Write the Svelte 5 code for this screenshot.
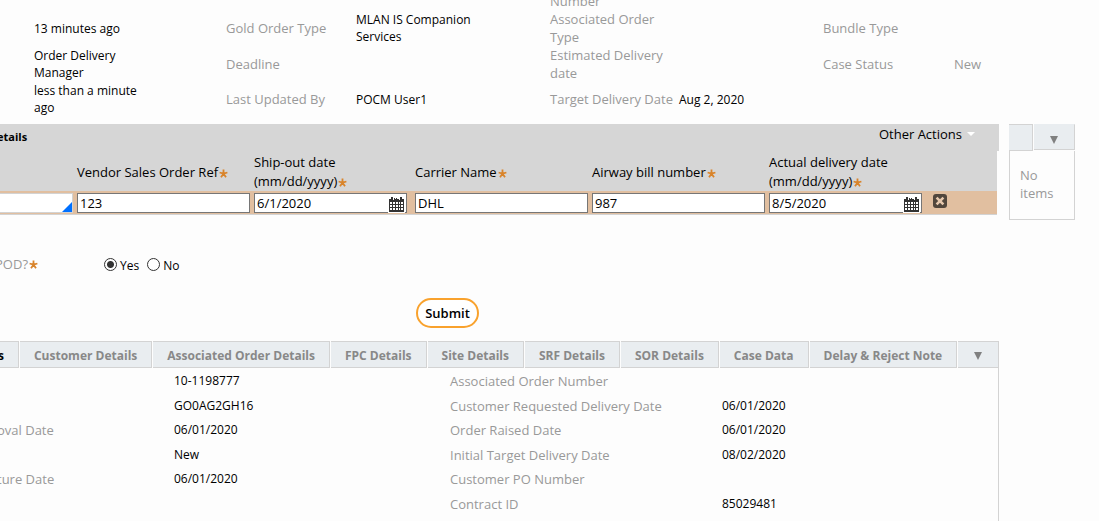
<script>
  const caseRows = [
    ['13 minutes ago', 'Gold Order Type', 'MLAN IS Companion Services', 'Associated Order Type', '', 'Bundle Type', ''],
    ['Order Delivery Manager', 'Deadline', '', 'Estimated Delivery date', '', 'Case Status', 'New'],
    ['less than a minute ago', 'Last Updated By', 'POCM User1', 'Target Delivery Date', 'Aug 2, 2020', '', '']
  ];

  let fields = $state([
    { id: 'vendor', label: ['Vendor Sales Order Ref'], value: '123', date: false },
    { id: 'shipout', label: ['Ship-out date', '(mm/dd/yyyy)'], value: '6/1/2020', date: true },
    { id: 'carrier', label: ['Carrier Name'], value: 'DHL', date: false },
    { id: 'airway', label: ['Airway bill number'], value: '987', date: false },
    { id: 'actual', label: ['Actual delivery date', '(mm/dd/yyyy)'], value: '8/5/2020', date: true }
  ]);
  let orderChoice = $state('');
  let pod = $state('yes');

  const tabs = [
    'Customer Details', 'Associated Order Details', 'FPC Details', 'Site Details',
    'SRF Details', 'SOR Details', 'Case Data', 'Delay & Reject Note'
  ];

  const details = [
    ['', '10-1198777', 'Associated Order Number', ''],
    ['', 'GO0AG2GH16', 'Customer Requested Delivery Date', '06/01/2020'],
    ['oval Date', '06/01/2020', 'Order Raised Date', '06/01/2020'],
    ['', 'New', 'Initial Target Delivery Date', '08/02/2020'],
    ['ture Date', '06/01/2020', 'Customer PO Number', ''],
    ['', '', 'Contract ID', '85029481']
  ];
</script>

{#snippet star()}
  <svg class="star" viewBox="0 0 9 9" aria-hidden="true">
    <path d="M4.5 0.4V4.7M4.5 4.7L0.6 3.5M4.5 4.7L8.4 3.5M4.5 4.7L2 8.3M4.5 4.7L7 8.3" />
  </svg>
{/snippet}

<div class="page">
  <header>
    <div class="row cut"><span class="label assoc">Number</span></div>
    {#each caseRows as row}
      <div class="row">
        {#each row as text, i}
          <span class={i % 2 || text === 'New' ? 'label' : 'value'}>{text}</span>
        {/each}
      </div>
    {/each}
  </header>

  <div class="columns">
    <main>
      <div class="band">
        <h2>etails</h2>
        <button class="actions" type="button">Other Actions <i></i></button>
      </div>
      <table>
        <colgroup>
          <col class="c-first" /><col class="c-text" /><col class="c-date" /><col class="c-text" />
          <col class="c-text" /><col class="c-date" /><col />
        </colgroup>
        <thead>
          <tr>
            <th></th>
            {#each fields as f}
              <th>
                <label for={f.id}>{f.label[0]}{#if f.label[1]}<br />{f.label[1]}{/if}{@render star()}</label>
              </th>
            {/each}
            <th></th>
          </tr>
        </thead>
        <tbody>
          <tr>
            <td>
              <div class="combo">
                <input type="text" aria-label="Order" bind:value={orderChoice} />
                <i></i>
              </div>
            </td>
            {#each fields as f}
              <td>
                <div class="field">
                  <input id={f.id} type="text" bind:value={f.value} />
                  {#if f.date}
                    <button type="button" aria-label="Calendar">
                      <svg viewBox="0 0 16 16" width="16" height="16">
                        <path fill="#333" d="M1 3h15v13H1z" />
                        <path fill="#fff" d="M3 1h3v3H3zM11 1h3v3h-3z" />
                        <path fill="#333" d="M3 1h2v4H3zM6 2h1v1H6zM8 2h1v1H8zM12 1h2v4h-2z" />
                        <path fill="#fff" d="M2 6h2v2H2zM5 6h2v2H5zM8 6h2v2H8zM11 6h1v2h-1zM13 6h2v2h-2zM2 9h2v2H2zM5 9h2v2H5zM8 9h2v2H8zM11 9h1v2h-1zM13 9h2v2h-2zM2 12h2v2H2zM5 12h2v2H5zM8 12h2v2H8zM11 12h1v2h-1zM13 12h2v2h-2z" />
                      </svg>
                    </button>
                  {/if}
                </div>
              </td>
            {/each}
            <td>
              <button class="remove" type="button" aria-label="Delete row">
                <svg viewBox="0 0 14 14" width="14" height="14">
                  <rect width="14" height="14" rx="3" fill="#51463c" />
                  <path d="M3.6 3.6l6.8 6.8M10.4 3.6l-6.8 6.8" stroke="#e6c8ad" stroke-width="2.6" />
                </svg>
              </button>
            </td>
          </tr>
        </tbody>
      </table>

      <div class="pod" role="radiogroup" aria-labelledby="pod-label">
        <span class="label" id="pod-label">POD?{@render star()}</span>
        <label><input type="radio" name="pod" value="yes" bind:group={pod} /><span>Yes</span></label>
        <label><input type="radio" name="pod" value="no" bind:group={pod} /><span>No</span></label>
      </div>

      <div class="submit"><button type="submit">Submit</button></div>

      <nav>
        <button class="active" type="button">s</button>
        {#each tabs as tab}
          <button type="button">{tab}</button>
        {/each}
        <button class="more" type="button" aria-label="More tabs"><i class="arrow"></i></button>
      </nav>
      <section>
        <div class="details">
          {#each details as row}
            {#each row as text, i}
              <span class={i % 2 ? 'value' : 'label'}>{text}</span>
            {/each}
          {/each}
        </div>
      </section>
    </main>

    <aside>
      <div class="side-tabs">
        <button type="button" aria-label="Items"></button>
        <button class="more" type="button" aria-label="More"><i class="arrow"></i></button>
      </div>
      <p>No items</p>
    </aside>
  </div>
</div>

<style>
  :global(body) {
    background: #fdfdfd;
  }
  .page {
    box-sizing: border-box;
    min-height: 100vh;
    display: flex;
    flex-direction: column;
    overflow: hidden;
    font: 13px/18px 'Open Sans', sans-serif;
    color: #000;
  }
  button,
  input {
    font: inherit;
    color: inherit;
    border-radius: 0;
    margin: 0;
  }
  button {
    padding: 0;
    border: 0;
    background: none;
    cursor: pointer;
  }
  .label {
    color: #999;
  }
  .value {
    font-size: 12px;
    line-height: 17px;
  }
  .star {
    flex: none;
    width: 9px;
    height: 9px;
    margin-left: 1px;
    vertical-align: -1px;
    fill: none;
    stroke: #d9842b;
    stroke-width: 1.8;
  }

  header {
    height: 124px;
  }
  .row {
    display: grid;
    grid-template-columns: 187fr 125fr 189fr 124fr 139fr 126fr 145fr;
    column-gap: 5px;
    align-items: center;
    height: 36px;
    padding-left: 34px;
  }
  .row:last-child {
    height: 34px;
  }
  .row > :first-child {
    max-width: 110px;
  }
  .row > :nth-child(3) {
    max-width: 120px;
  }
  .row > .assoc {
    grid-column: 4;
  }
  .row.cut {
    height: 10px;
    overflow: hidden;
    align-content: end;
  }

  .columns {
    flex: 1;
    display: flex;
    gap: 10px;
    padding-right: 24px;
  }
  main {
    flex: 1;
    min-width: 0;
    display: flex;
    flex-direction: column;
  }
  .band {
    display: flex;
    justify-content: space-between;
    height: 27px;
    padding-right: 24px;
    background: #d6d6d6;
  }
  h2 {
    margin: 4px 0 0 -3px;
    font-size: 11px;
    line-height: 18px;
    font-weight: 700;
  }
  .actions {
    align-self: flex-start;
    display: flex;
    align-items: center;
    gap: 5px;
    height: 20px;
  }
  .actions i {
    border: 4px solid transparent;
    border-top-color: #fff;
    border-bottom: 0;
  }

  table {
    width: calc(100% - 2px);
    table-layout: fixed;
    border-collapse: collapse;
  }
  .c-first {
    width: 75px;
  }
  .c-text {
    width: 177px;
  }
  .c-date {
    width: 161px;
  }
  th {
    height: 38px;
    padding: 2px 2px 0;
    background: #d6d6d6;
    font-weight: 400;
    line-height: 19px;
    text-align: left;
  }
  tbody tr {
    background: #e1bfa0;
    border-bottom: 1px solid #d3d3d3;
  }
  td {
    height: 21px;
    padding: 1px 2px;
  }
  td:first-child {
    padding-left: 0;
  }
  .combo {
    display: flex;
    position: relative;
  }
  .combo i {
    position: absolute;
    right: 1px;
    bottom: 1px;
    border-left: 10px solid transparent;
    border-bottom: 10px solid #0070ff;
  }
  td input {
    box-sizing: border-box;
    width: 100%;
    height: 20px;
    padding: 0 2px;
    border: 1px solid #767676;
    background: #fff;
  }
  .combo input {
    border-color: #d3d3d3;
    border-left: 0;
  }
  .field {
    display: flex;
    position: relative;
  }
  td:nth-child(3) .field,
  td:nth-child(6) .field {
    width: 153px;
  }
  .field button {
    position: absolute;
    right: 2px;
    bottom: 0;
    width: 17px;
    height: 17px;
    background: #fff;
  }
  .field svg {
    display: block;
  }
  .remove {
    display: flex;
    margin: -4px 0 0 3px;
  }

  .pod {
    display: flex;
    align-items: center;
    height: 18px;
    margin-top: 40px;
  }
  .pod .label {
    flex: none;
    display: flex;
    justify-content: flex-end;
    align-items: center;
    width: 38px;
    margin-right: 66px;
  }
  .pod label {
    display: flex;
    align-items: center;
    gap: 3px;
    margin-right: 8px;
    font-size: 12px;
  }
  .pod label span {
    padding-top: 3px;
  }
  input[type='radio'] {
    appearance: none;
    box-sizing: border-box;
    width: 13px;
    height: 13px;
    border: 1px solid #333;
    border-radius: 50%;
    background: #fff;
  }
  input[type='radio']:checked {
    background: radial-gradient(circle, #333 3px, #fff 4px);
  }

  .submit {
    display: flex;
    justify-content: center;
    margin: 25px 104px 13px 0;
  }
  .submit button {
    height: 30px;
    padding: 0 7px;
    border: 2px solid #f9a22d;
    border-radius: 15px;
    background: #fff;
    font-weight: 600;
  }

  nav {
    display: flex;
    gap: 1px;
    height: 27px;
  }
  nav button {
    flex: none;
    padding: 2px 14px 0;
    border: 1px solid #d3d3d3;
    border-left: 0;
    background: #e9edf0;
    color: #888;
    font-size: 12px;
    font-weight: 700;
  }
  nav .active {
    padding: 2px 14px 0 0;
    color: #000;
    margin-left: -2px;
  }
  nav .more {
    flex: 1;
    padding: 2px 0 0;
  }
  .arrow {
    display: inline-block;
    border: 4px solid transparent;
    border-top: 8px solid #808080;
    border-bottom: 0;
  }
  section {
    flex: 1;
    border-right: 1px solid #d3d3d3;
  }
  .details {
    display: grid;
    grid-template-columns: 174fr 276fr 272fr 276fr;
    grid-template-rows: repeat(6, 1fr);
    height: 147px;
    padding-top: 1px;
  }
  .details .label {
    line-height: 24px;
  }
  .details .label:nth-child(4n + 1) {
    margin-left: -3px;
  }
  .details .value {
    line-height: 23px;
  }

  aside {
    width: 66px;
  }
  .side-tabs {
    display: flex;
    gap: 1px;
    height: 27px;
  }
  .side-tabs button {
    width: 24px;
    border: 1px solid #d3d3d3;
    border-left: 0;
    background: #e9edf0;
  }
  .side-tabs .more {
    flex: 1;
    height: 26px;
    padding-top: 4px;
    border-top-color: #e9edf0;
  }
  aside p {
    box-sizing: border-box;
    height: 69px;
    margin: 0;
    padding: 15px 10px;
    border: 1px solid #d3d3d3;
    border-top: 0;
    color: #999;
  }
</style>
